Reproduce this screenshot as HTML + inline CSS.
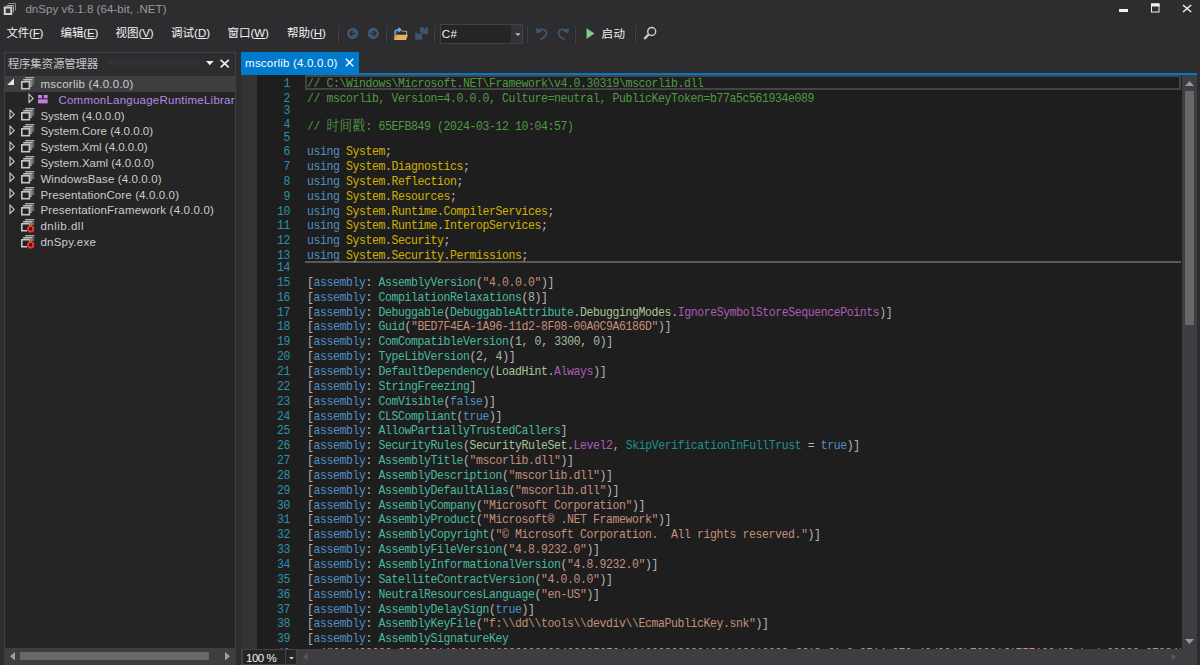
<!DOCTYPE html>
<html lang="zh-CN"><head><meta charset="utf-8"><title>dnSpy v6.1.8 (64-bit, .NET)</title>
<style>
*{box-sizing:border-box;margin:0;padding:0}
html,body{width:1200px;height:665px;overflow:hidden;background:#2d2d30}
body{position:relative;font-family:"Liberation Sans","Noto Sans CJK SC",sans-serif;font-size:12px;color:#f1f1f1}
.abs,.ti,.tt,.ln,.cl,.sel,.mi{position:absolute}
.tx{white-space:nowrap;line-height:16px}
.title{left:25.5px;top:1.5px;font-size:12px;line-height:16px;color:#9a9a9a;white-space:nowrap;letter-spacing:.12px}
.mi{top:25px;font-size:12px;line-height:16px;color:#f1f1f1;white-space:nowrap}
.tx u{text-decoration:underline;text-underline-offset:0.6px;text-decoration-thickness:1px}
.sep{position:absolute;top:26px;width:2px;height:17px;background:linear-gradient(90deg,#262628 50%,#414145 50%);margin-left:-1px}
#panel{position:absolute;left:4px;top:52px;width:232px;height:613px;background:#252526;border:1px solid #3f3f46;border-bottom:0;overflow:hidden}
#phead{position:absolute;left:0;top:0;width:230px;height:23px;background:#2d2d30}
.ptitle{position:absolute;left:3px;top:3px;font-size:12px;line-height:16px;color:#d0d0d0;white-space:nowrap}
.tt{font-size:12px;line-height:16px;white-space:nowrap}
.sel{left:5px;width:230px;height:16.4px;background:#3e3e40}
#tree{position:absolute;left:0;top:0;width:235px;height:648px;overflow:hidden}
#editor{position:absolute;left:241px;top:75px;width:941px;height:574px;background:#1e1e1e;overflow:hidden}
#gutter{position:absolute;left:241px;top:75px;width:16px;height:574px;background:#333333}
#codeclip{position:absolute;left:0;top:0;width:1181px;height:649px;overflow:hidden}
.ln,.cl{font-family:"Liberation Mono","Noto Sans CJK SC",monospace;font-size:11.5px;letter-spacing:-0.401px;line-height:14px;height:14px;white-space:pre;transform:scaleY(1.06);transform-origin:0 0}
.cl{opacity:.9}
.ln{left:250px;width:40px;text-align:right;color:#2b91af}
.cl{left:307px}
.cj{font-family:"Noto Serif CJK SC","Noto Sans CJK SC","Liberation Mono",monospace;font-size:12.5px;letter-spacing:0.5px}
.c,.cj{color:#57a64a}.k{color:#569cd6}.n{color:#e0c000}.t{color:#4ec9b0}.s{color:#d69d85}.p{color:#c4c4c4}.u{color:#b5cea8}.e{color:#b8d7a3}.f{color:#bd63c5}.r{color:#1b9f9f}
</style></head><body>
<!-- title bar -->
<svg class="abs" style="left:3px;top:2px" width="14" height="14" viewBox="0 0 14 14"><path d="M5.5 1.5H12.5V8.5" fill="none" stroke="#8c8c8c" stroke-width="1"/><path d="M3.5 3.5H10.5V10.5" fill="none" stroke="#a8a8a8" stroke-width="1"/><rect x="1.75" y="5.5" width="6.5" height="6.5" fill="#3a3a3c" stroke="#d2d2d2" stroke-width="2"/></svg>
<div class="abs tx" style="left:25.40px;top:0.50px;font-size:11.5px;letter-spacing:0.069px;color:#999999;">dnSpy v6.1.8 (64-bit, .NET)</div>
<div class="abs" style="left:1119px;top:8.5px;width:9px;height:3.5px;background:#f1f1f1"></div>
<svg class="abs" style="left:1150px;top:3px" width="10" height="10" viewBox="0 0 10 10"><rect x="1" y="0.5" width="8.5" height="3" fill="#f1f1f1"/><rect x="1.5" y="1" width="7.5" height="8" fill="none" stroke="#f1f1f1" stroke-width="1"/></svg>
<svg class="abs" style="left:1182px;top:4px" width="10" height="9" viewBox="0 0 10 9"><path d="M1 1L9.2 8M9.2 1L1 8" stroke="#f1f1f1" stroke-width="1.5" fill="none"/></svg>

<!-- menu -->
<div class="abs tx" style="left:6.50px;top:25.00px;font-size:11.5px;letter-spacing:-0.217px;color:#f1f1f1;">文件(<u>F</u>)</div>
<div class="abs tx" style="left:60.60px;top:25.00px;font-size:11.5px;letter-spacing:-0.129px;color:#f1f1f1;">编辑(<u>E</u>)</div>
<div class="abs tx" style="left:115.50px;top:25.00px;font-size:11.5px;letter-spacing:-0.049px;color:#f1f1f1;">视图(<u>V</u>)</div>
<div class="abs tx" style="left:171.10px;top:25.00px;font-size:11.5px;letter-spacing:0.006px;color:#f1f1f1;">调试(<u>D</u>)</div>
<div class="abs tx" style="left:227.60px;top:25.00px;font-size:11.5px;letter-spacing:-0.043px;color:#f1f1f1;">窗口(<u>W</u>)</div>
<div class="abs tx" style="left:286.90px;top:25.00px;font-size:11.5px;letter-spacing:0.006px;color:#f1f1f1;">帮助(<u>H</u>)</div>

<!-- toolbar -->
<div class="sep" style="left:338px"></div>
<svg class="abs" style="left:346px;top:27px" width="14" height="14" viewBox="0 0 14 14"><circle cx="6.7" cy="6.4" r="5.6" fill="#3f5873"/><path d="M6.6 3.6L3.8 6.4L6.6 9.2M4 6.4H9.8" stroke="#2d2d30" stroke-width="1.5" fill="none"/></svg>
<svg class="abs" style="left:366px;top:27px" width="14" height="14" viewBox="0 0 14 14"><circle cx="7.2" cy="6.4" r="5.6" fill="#3f5873"/><path d="M7.3 3.6L10.1 6.4L7.3 9.2M9.9 6.4H4.1" stroke="#2d2d30" stroke-width="1.5" fill="none"/></svg>
<div class="sep" style="left:386px"></div>
<svg class="abs" style="left:393px;top:26px" width="16" height="16" viewBox="0 0 16 16"><path d="M8.6 5.3H13.6V9" fill="none" stroke="#c9964a" stroke-width="1.1"/><path d="M1 8.4H4.6V14H1Z" fill="#b98a3e"/><path d="M4.4 8.8H14.9L13.2 14H1Z" fill="#e3b364"/><path d="M2.6 8.2C1.2 5.6 2.6 3.4 6.6 4" fill="none" stroke="#5aa2e6" stroke-width="1.9"/><path d="M5.6 1L9 4.1L5.2 6.6Z" fill="#6cb2f2"/></svg>
<svg class="abs" style="left:414px;top:27px" width="15" height="14" viewBox="0 0 15 14"><path d="M6 0.2H13L14 1.2V7H6Z" fill="#40566f"/><rect x="9.6" y="0.2" width="1.6" height="2" fill="#2d2d30"/><path d="M0.8 5.4H7.8L8.6 6.2V13H0.8Z" fill="#40566f" stroke="#2d2d30" stroke-width="0.8"/><rect x="3.6" y="5.6" width="1.8" height="2" fill="#2d2d30"/></svg>
<div class="sep" style="left:434px"></div>
<div class="abs" style="left:440px;top:24px;width:83px;height:19.5px;background:#252526;border:1px solid #434346"></div>
<div class="abs" style="left:511.2px;top:25px;width:10.8px;height:17.5px;background:#333337"></div>
<div class="abs tx" style="left:441.70px;top:25.50px;font-size:11.5px;letter-spacing:0.598px;color:#f1f1f1;">C#</div>
<svg class="abs" style="left:515px;top:33px" width="6" height="4" viewBox="0 0 6 4"><path d="M0.2 0.2H5.6L2.9 3.1Z" fill="#c0c0c0"/></svg>
<div class="sep" style="left:527px"></div>
<svg class="abs" style="left:535px;top:27px" width="14" height="14" viewBox="0 0 14 14"><path d="M3.2 3.6C7.5 0.8 12 3.2 11.4 6.8C11 9 8.5 10.8 5.2 12.4" fill="none" stroke="#3f5873" stroke-width="1.7"/><path d="M1 0.8L1.6 6.6L7 4.6Z" fill="#3f5873"/></svg>
<svg class="abs" style="left:555.5px;top:27px" width="14" height="14" viewBox="0 0 14 14"><path d="M10.8 3.6C6.5 0.8 2 3.2 2.6 6.8C3 9 5.5 10.8 8.8 12.4" fill="none" stroke="#3f5873" stroke-width="1.7"/><path d="M13 0.8L12.4 6.6L7 4.6Z" fill="#3f5873"/></svg>
<div class="sep" style="left:575px"></div>
<svg class="abs" style="left:585.5px;top:28px" width="9" height="12" viewBox="0 0 9 12"><path d="M0.5 0.3L8.4 5.6L0.5 10.9Z" fill="#84cc84"/></svg>
<div class="abs tx" style="left:601.40px;top:25.50px;font-size:11.5px;letter-spacing:0.600px;color:#f1f1f1;">启动</div>
<div class="sep" style="left:635px"></div>
<svg class="abs" style="left:643px;top:26px" width="15" height="15" viewBox="0 0 15 15"><circle cx="8.7" cy="5.5" r="4" fill="none" stroke="#cfcfcf" stroke-width="1.4"/><path d="M5.8 8.4L1.2 13" stroke="#cfcfcf" stroke-width="2.2" fill="none"/></svg>

<!-- tree panel -->
<div id="panel"><div id="phead"></div></div>
<div class="abs tx" style="left:7.70px;top:55.50px;font-size:11.5px;letter-spacing:-0.200px;color:#c6c6c6;">程序集资源管理器</div>
<svg class="abs" style="left:107px;top:61px" width="91" height="5" viewBox="0 0 91 5"><defs><pattern id="dots" width="4" height="4" patternUnits="userSpaceOnUse"><rect x="2" y="0" width="1" height="1" fill="#48484c"/><rect x="0" y="2" width="1" height="1" fill="#48484c"/></pattern></defs><rect width="91" height="5" fill="url(#dots)"/></svg>
<svg class="abs" style="left:206px;top:60.7px" width="8" height="5" viewBox="0 0 8 5"><path d="M0 0H7.6L3.8 4.3Z" fill="#f1f1f1"/></svg>
<svg class="abs" style="left:220px;top:58.6px" width="10" height="10" viewBox="0 0 10 10"><path d="M0.6 0.8L8.8 8.4M8.8 0.8L0.6 8.4" stroke="#f1f1f1" stroke-width="1.6" fill="none"/></svg>
<div id="tree">
<div class="sel" style="top:75.7px"></div>
<svg class="ti" style="left:7px;top:78.4px" width="8" height="8" viewBox="0 0 8 8"><path d="M7 0.2V7H0.2Z" fill="#e6e6e6"/></svg>
<svg class="ti" style="left:20.8px;top:76.5px" width="14" height="13" viewBox="0 0 14 13"><rect x="4.2" y="0" width="9" height="8" fill="#656565"/><rect x="4.2" y="0" width="9" height="1" fill="#a8a8a8"/><rect x="2.2" y="2" width="9" height="8" fill="#828282"/><rect x="2.2" y="2" width="9" height="1" fill="#bdbdbd"/><rect x="0.8" y="4.8" width="7.6" height="6.9" fill="#222224" stroke="#c6c6c6" stroke-width="1.6"/></svg>
<div class="abs tx" style="left:40.40px;top:76.00px;font-size:11.5px;letter-spacing:0.242px;color:#cccccc;">mscorlib (4.0.0.0)</div>
<svg class="ti" style="left:28.4px;top:93.1px" width="7" height="11" viewBox="0 0 7 11"><path d="M1 1.2L5.2 5.4L1 9.6Z" fill="none" stroke="#d4d4d4" stroke-width="1.05"/></svg>
<svg class="ti" style="left:37.9px;top:94.7px" width="10" height="9" viewBox="0 0 10 9"><rect x="0" y="0" width="4.1" height="3.3" fill="#c07fe0"/><rect x="5.7" y="0" width="4" height="3.3" fill="#c07fe0"/><rect x="0" y="4.3" width="9.7" height="4.1" fill="#c07fe0"/></svg>
<div class="tt" style="left:58.4px;top:91.8px;color:#b18ae0;font-size:11.5px;letter-spacing:0.235px">CommonLanguageRuntimeLibrary</div>
<svg class="ti" style="left:9.4px;top:108.9px" width="7" height="11" viewBox="0 0 7 11"><path d="M1 1.2L5.2 5.4L1 9.6Z" fill="none" stroke="#d4d4d4" stroke-width="1.05"/></svg>
<svg class="ti" style="left:20.8px;top:108.1px" width="14" height="13" viewBox="0 0 14 13"><rect x="4.2" y="0" width="9" height="8" fill="#656565"/><rect x="4.2" y="0" width="9" height="1" fill="#a8a8a8"/><rect x="2.2" y="2" width="9" height="8" fill="#828282"/><rect x="2.2" y="2" width="9" height="1" fill="#bdbdbd"/><rect x="0.8" y="4.8" width="7.6" height="6.9" fill="#222224" stroke="#c6c6c6" stroke-width="1.6"/></svg>
<div class="abs tx" style="left:40.40px;top:107.60px;font-size:11.5px;letter-spacing:-0.011px;color:#cccccc;">System (4.0.0.0)</div>
<svg class="ti" style="left:9.4px;top:124.7px" width="7" height="11" viewBox="0 0 7 11"><path d="M1 1.2L5.2 5.4L1 9.6Z" fill="none" stroke="#d4d4d4" stroke-width="1.05"/></svg>
<svg class="ti" style="left:20.8px;top:123.9px" width="14" height="13" viewBox="0 0 14 13"><rect x="4.2" y="0" width="9" height="8" fill="#656565"/><rect x="4.2" y="0" width="9" height="1" fill="#a8a8a8"/><rect x="2.2" y="2" width="9" height="8" fill="#828282"/><rect x="2.2" y="2" width="9" height="1" fill="#bdbdbd"/><rect x="0.8" y="4.8" width="7.6" height="6.9" fill="#222224" stroke="#c6c6c6" stroke-width="1.6"/></svg>
<div class="abs tx" style="left:40.40px;top:123.40px;font-size:11.5px;letter-spacing:0.010px;color:#cccccc;">System.Core (4.0.0.0)</div>
<svg class="ti" style="left:9.4px;top:140.5px" width="7" height="11" viewBox="0 0 7 11"><path d="M1 1.2L5.2 5.4L1 9.6Z" fill="none" stroke="#d4d4d4" stroke-width="1.05"/></svg>
<svg class="ti" style="left:20.8px;top:139.7px" width="14" height="13" viewBox="0 0 14 13"><rect x="4.2" y="0" width="9" height="8" fill="#656565"/><rect x="4.2" y="0" width="9" height="1" fill="#a8a8a8"/><rect x="2.2" y="2" width="9" height="8" fill="#828282"/><rect x="2.2" y="2" width="9" height="1" fill="#bdbdbd"/><rect x="0.8" y="4.8" width="7.6" height="6.9" fill="#222224" stroke="#c6c6c6" stroke-width="1.6"/></svg>
<div class="abs tx" style="left:40.40px;top:139.20px;font-size:11.5px;letter-spacing:-0.009px;color:#cccccc;">System.Xml (4.0.0.0)</div>
<svg class="ti" style="left:9.4px;top:156.3px" width="7" height="11" viewBox="0 0 7 11"><path d="M1 1.2L5.2 5.4L1 9.6Z" fill="none" stroke="#d4d4d4" stroke-width="1.05"/></svg>
<svg class="ti" style="left:20.8px;top:155.5px" width="14" height="13" viewBox="0 0 14 13"><rect x="4.2" y="0" width="9" height="8" fill="#656565"/><rect x="4.2" y="0" width="9" height="1" fill="#a8a8a8"/><rect x="2.2" y="2" width="9" height="8" fill="#828282"/><rect x="2.2" y="2" width="9" height="1" fill="#bdbdbd"/><rect x="0.8" y="4.8" width="7.6" height="6.9" fill="#222224" stroke="#c6c6c6" stroke-width="1.6"/></svg>
<div class="abs tx" style="left:40.40px;top:155.00px;font-size:11.5px;letter-spacing:-0.003px;color:#cccccc;">System.Xaml (4.0.0.0)</div>
<svg class="ti" style="left:9.4px;top:172.1px" width="7" height="11" viewBox="0 0 7 11"><path d="M1 1.2L5.2 5.4L1 9.6Z" fill="none" stroke="#d4d4d4" stroke-width="1.05"/></svg>
<svg class="ti" style="left:20.8px;top:171.3px" width="14" height="13" viewBox="0 0 14 13"><rect x="4.2" y="0" width="9" height="8" fill="#656565"/><rect x="4.2" y="0" width="9" height="1" fill="#a8a8a8"/><rect x="2.2" y="2" width="9" height="8" fill="#828282"/><rect x="2.2" y="2" width="9" height="1" fill="#bdbdbd"/><rect x="0.8" y="4.8" width="7.6" height="6.9" fill="#222224" stroke="#c6c6c6" stroke-width="1.6"/></svg>
<div class="abs tx" style="left:40.40px;top:170.80px;font-size:11.5px;letter-spacing:0.110px;color:#cccccc;">WindowsBase (4.0.0.0)</div>
<svg class="ti" style="left:9.4px;top:187.9px" width="7" height="11" viewBox="0 0 7 11"><path d="M1 1.2L5.2 5.4L1 9.6Z" fill="none" stroke="#d4d4d4" stroke-width="1.05"/></svg>
<svg class="ti" style="left:20.8px;top:187.1px" width="14" height="13" viewBox="0 0 14 13"><rect x="4.2" y="0" width="9" height="8" fill="#656565"/><rect x="4.2" y="0" width="9" height="1" fill="#a8a8a8"/><rect x="2.2" y="2" width="9" height="8" fill="#828282"/><rect x="2.2" y="2" width="9" height="1" fill="#bdbdbd"/><rect x="0.8" y="4.8" width="7.6" height="6.9" fill="#222224" stroke="#c6c6c6" stroke-width="1.6"/></svg>
<div class="abs tx" style="left:40.40px;top:186.60px;font-size:11.5px;letter-spacing:0.122px;color:#cccccc;">PresentationCore (4.0.0.0)</div>
<svg class="ti" style="left:9.4px;top:203.7px" width="7" height="11" viewBox="0 0 7 11"><path d="M1 1.2L5.2 5.4L1 9.6Z" fill="none" stroke="#d4d4d4" stroke-width="1.05"/></svg>
<svg class="ti" style="left:20.8px;top:202.9px" width="14" height="13" viewBox="0 0 14 13"><rect x="4.2" y="0" width="9" height="8" fill="#656565"/><rect x="4.2" y="0" width="9" height="1" fill="#a8a8a8"/><rect x="2.2" y="2" width="9" height="8" fill="#828282"/><rect x="2.2" y="2" width="9" height="1" fill="#bdbdbd"/><rect x="0.8" y="4.8" width="7.6" height="6.9" fill="#222224" stroke="#c6c6c6" stroke-width="1.6"/></svg>
<div class="abs tx" style="left:40.40px;top:202.40px;font-size:11.5px;letter-spacing:0.180px;color:#cccccc;">PresentationFramework (4.0.0.0)</div>
<svg class="ti" style="left:20.8px;top:218.7px" width="14" height="14" viewBox="0 0 14 14"><rect x="4.2" y="0" width="9" height="6" fill="#656565"/><rect x="4.2" y="0" width="9" height="1" fill="#a8a8a8"/><rect x="2.2" y="2" width="9" height="5" fill="#828282"/><rect x="2.2" y="2" width="9" height="1" fill="#bdbdbd"/><path d="M8.4 4.8H0.8V11.7H6" fill="#222224" stroke="#c6c6c6" stroke-width="1.6"/><circle cx="9.7" cy="9.9" r="3.6" fill="#ee3a2c"/><path d="M8.3 8.5L11.1 11.3M11.1 8.5L8.3 11.3" stroke="#3a0d08" stroke-width="1.3"/></svg>
<div class="abs tx" style="left:40.40px;top:218.20px;font-size:11.5px;letter-spacing:0.511px;color:#cccccc;">dnlib.dll</div>
<svg class="ti" style="left:20.8px;top:234.5px" width="14" height="14" viewBox="0 0 14 14"><rect x="4.2" y="0" width="9" height="6" fill="#656565"/><rect x="4.2" y="0" width="9" height="1" fill="#a8a8a8"/><rect x="2.2" y="2" width="9" height="5" fill="#828282"/><rect x="2.2" y="2" width="9" height="1" fill="#bdbdbd"/><path d="M8.4 4.8H0.8V11.7H6" fill="#222224" stroke="#c6c6c6" stroke-width="1.6"/><circle cx="9.7" cy="9.9" r="3.6" fill="#ee3a2c"/><path d="M8.3 8.5L11.1 11.3M11.1 8.5L8.3 11.3" stroke="#3a0d08" stroke-width="1.3"/></svg>
<div class="abs tx" style="left:40.40px;top:234.00px;font-size:11.5px;letter-spacing:0.244px;color:#cccccc;">dnSpy.exe</div>
</div>
<!-- tree h scrollbar -->
<div class="abs" style="left:5px;top:648px;width:230px;height:17px;background:#3e3e42"></div>
<div class="abs" style="left:20px;top:652px;width:189px;height:8.3px;background:#686868"></div>
<svg class="abs" style="left:10px;top:652px" width="5" height="9" viewBox="0 0 5 9"><path d="M5 0V8.6L0 4.3Z" fill="#a0a0a0"/></svg>
<svg class="abs" style="left:224.5px;top:652px" width="5" height="9" viewBox="0 0 5 9"><path d="M0 0V8.6L5 4.3Z" fill="#a0a0a0"/></svg>

<!-- tab -->
<div class="abs" style="left:241px;top:52px;width:118px;height:23px;background:#007acc"></div>
<div class="abs" style="left:241px;top:73px;width:956px;height:2px;background:#007acc"></div>
<div class="abs tx" style="left:245.10px;top:55.00px;font-size:11.5px;letter-spacing:0.203px;color:#ffffff;">mscorlib (4.0.0.0)</div>
<svg class="abs" style="left:345px;top:58px" width="9" height="9" viewBox="0 0 9 9"><path d="M0.8 0.8L8.2 8.2M8.2 0.8L0.8 8.2" stroke="#fff" stroke-width="1.4" fill="none"/></svg>

<!-- editor -->
<div id="editor"></div>
<div id="gutter"></div>
<div class="abs" style="left:305px;top:75px;width:876px;height:15px;border:2px solid #444444"></div>
<div class="abs" style="left:305px;top:261.4px;width:876px;height:1.5px;background:#5a5a5a"></div>
<div id="codeclip">
<div class="ln" style="top:75.83px">1</div>
<div class="ln" style="top:90.68px">2</div>
<div class="ln" style="top:102.93px">3</div>
<div class="ln" style="top:117.43px">4</div>
<div class="ln" style="top:129.68px">5</div>
<div class="ln" style="top:144.18px">6</div>
<div class="ln" style="top:159.03px">7</div>
<div class="ln" style="top:173.88px">8</div>
<div class="ln" style="top:188.73px">9</div>
<div class="ln" style="top:203.58px">10</div>
<div class="ln" style="top:218.43px">11</div>
<div class="ln" style="top:233.28px">12</div>
<div class="ln" style="top:248.13px">13</div>
<div class="ln" style="top:260.38px">14</div>
<div class="ln" style="top:274.88px">15</div>
<div class="ln" style="top:289.73px">16</div>
<div class="ln" style="top:304.58px">17</div>
<div class="ln" style="top:319.43px">18</div>
<div class="ln" style="top:334.28px">19</div>
<div class="ln" style="top:349.13px">20</div>
<div class="ln" style="top:363.98px">21</div>
<div class="ln" style="top:378.83px">22</div>
<div class="ln" style="top:393.68px">23</div>
<div class="ln" style="top:408.53px">24</div>
<div class="ln" style="top:423.38px">25</div>
<div class="ln" style="top:438.23px">26</div>
<div class="ln" style="top:453.08px">27</div>
<div class="ln" style="top:467.93px">28</div>
<div class="ln" style="top:482.78px">29</div>
<div class="ln" style="top:497.63px">30</div>
<div class="ln" style="top:512.48px">31</div>
<div class="ln" style="top:527.33px">32</div>
<div class="ln" style="top:542.18px">33</div>
<div class="ln" style="top:557.03px">34</div>
<div class="ln" style="top:571.88px">35</div>
<div class="ln" style="top:586.73px">36</div>
<div class="ln" style="top:601.58px">37</div>
<div class="ln" style="top:616.43px">38</div>
<div class="ln" style="top:631.28px">39</div>
<div class="ln" style="top:645.63px">40</div>
<div class="cl" style="top:75.83px"><span class="c">// C:\Windows\Microsoft.NET\Framework\v4.0.30319\mscorlib.dll</span></div>
<div class="cl" style="top:90.68px"><span class="c">// mscorlib, Version=4.0.0.0, Culture=neutral, PublicKeyToken=b77a5c561934e089</span></div>
<div class="cl" style="top:117.43px"><span class="c">// </span><span class="cj">时间戳</span><span class="c">: 65EFB849 (2024-03-12 10:04:57)</span></div>
<div class="cl" style="top:144.18px"><span class="k">using</span><span class="p"> </span><span class="n">System</span><span class="p">;</span></div>
<div class="cl" style="top:159.03px"><span class="k">using</span><span class="p"> </span><span class="n">System</span><span class="p">.</span><span class="n">Diagnostics</span><span class="p">;</span></div>
<div class="cl" style="top:173.88px"><span class="k">using</span><span class="p"> </span><span class="n">System</span><span class="p">.</span><span class="n">Reflection</span><span class="p">;</span></div>
<div class="cl" style="top:188.73px"><span class="k">using</span><span class="p"> </span><span class="n">System</span><span class="p">.</span><span class="n">Resources</span><span class="p">;</span></div>
<div class="cl" style="top:203.58px"><span class="k">using</span><span class="p"> </span><span class="n">System</span><span class="p">.</span><span class="n">Runtime</span><span class="p">.</span><span class="n">CompilerServices</span><span class="p">;</span></div>
<div class="cl" style="top:218.43px"><span class="k">using</span><span class="p"> </span><span class="n">System</span><span class="p">.</span><span class="n">Runtime</span><span class="p">.</span><span class="n">InteropServices</span><span class="p">;</span></div>
<div class="cl" style="top:233.28px"><span class="k">using</span><span class="p"> </span><span class="n">System</span><span class="p">.</span><span class="n">Security</span><span class="p">;</span></div>
<div class="cl" style="top:248.13px"><span class="k">using</span><span class="p"> </span><span class="n">System</span><span class="p">.</span><span class="n">Security</span><span class="p">.</span><span class="n">Permissions</span><span class="p">;</span></div>
<div class="cl" style="top:274.88px"><span class="p">[</span><span class="k">assembly</span><span class="p">: </span><span class="t">AssemblyVersion</span><span class="p">(</span><span class="s">"4.0.0.0"</span><span class="p">)</span><span class="p">]</span></div>
<div class="cl" style="top:289.73px"><span class="p">[</span><span class="k">assembly</span><span class="p">: </span><span class="t">CompilationRelaxations</span><span class="p">(</span><span class="u">8</span><span class="p">)</span><span class="p">]</span></div>
<div class="cl" style="top:304.58px"><span class="p">[</span><span class="k">assembly</span><span class="p">: </span><span class="t">Debuggable</span><span class="p">(</span><span class="t">DebuggableAttribute</span><span class="p">.</span><span class="e">DebuggingModes</span><span class="p">.</span><span class="f">IgnoreSymbolStoreSequencePoints</span><span class="p">)</span><span class="p">]</span></div>
<div class="cl" style="top:319.43px"><span class="p">[</span><span class="k">assembly</span><span class="p">: </span><span class="t">Guid</span><span class="p">(</span><span class="s">"BED7F4EA-1A96-11d2-8F08-00A0C9A6186D"</span><span class="p">)</span><span class="p">]</span></div>
<div class="cl" style="top:334.28px"><span class="p">[</span><span class="k">assembly</span><span class="p">: </span><span class="t">ComCompatibleVersion</span><span class="p">(</span><span class="u">1</span><span class="p">, </span><span class="u">0</span><span class="p">, </span><span class="u">3300</span><span class="p">, </span><span class="u">0</span><span class="p">)</span><span class="p">]</span></div>
<div class="cl" style="top:349.13px"><span class="p">[</span><span class="k">assembly</span><span class="p">: </span><span class="t">TypeLibVersion</span><span class="p">(</span><span class="u">2</span><span class="p">, </span><span class="u">4</span><span class="p">)</span><span class="p">]</span></div>
<div class="cl" style="top:363.98px"><span class="p">[</span><span class="k">assembly</span><span class="p">: </span><span class="t">DefaultDependency</span><span class="p">(</span><span class="e">LoadHint</span><span class="p">.</span><span class="f">Always</span><span class="p">)</span><span class="p">]</span></div>
<div class="cl" style="top:378.83px"><span class="p">[</span><span class="k">assembly</span><span class="p">: </span><span class="t">StringFreezing</span><span class="p">]</span></div>
<div class="cl" style="top:393.68px"><span class="p">[</span><span class="k">assembly</span><span class="p">: </span><span class="t">ComVisible</span><span class="p">(</span><span class="k">false</span><span class="p">)</span><span class="p">]</span></div>
<div class="cl" style="top:408.53px"><span class="p">[</span><span class="k">assembly</span><span class="p">: </span><span class="t">CLSCompliant</span><span class="p">(</span><span class="k">true</span><span class="p">)</span><span class="p">]</span></div>
<div class="cl" style="top:423.38px"><span class="p">[</span><span class="k">assembly</span><span class="p">: </span><span class="t">AllowPartiallyTrustedCallers</span><span class="p">]</span></div>
<div class="cl" style="top:438.23px"><span class="p">[</span><span class="k">assembly</span><span class="p">: </span><span class="t">SecurityRules</span><span class="p">(</span><span class="e">SecurityRuleSet</span><span class="p">.</span><span class="f">Level2</span><span class="p">, </span><span class="r">SkipVerificationInFullTrust</span><span class="p"> = </span><span class="k">true</span><span class="p">)</span><span class="p">]</span></div>
<div class="cl" style="top:453.08px"><span class="p">[</span><span class="k">assembly</span><span class="p">: </span><span class="t">AssemblyTitle</span><span class="p">(</span><span class="s">"mscorlib.dll"</span><span class="p">)</span><span class="p">]</span></div>
<div class="cl" style="top:467.93px"><span class="p">[</span><span class="k">assembly</span><span class="p">: </span><span class="t">AssemblyDescription</span><span class="p">(</span><span class="s">"mscorlib.dll"</span><span class="p">)</span><span class="p">]</span></div>
<div class="cl" style="top:482.78px"><span class="p">[</span><span class="k">assembly</span><span class="p">: </span><span class="t">AssemblyDefaultAlias</span><span class="p">(</span><span class="s">"mscorlib.dll"</span><span class="p">)</span><span class="p">]</span></div>
<div class="cl" style="top:497.63px"><span class="p">[</span><span class="k">assembly</span><span class="p">: </span><span class="t">AssemblyCompany</span><span class="p">(</span><span class="s">"Microsoft Corporation"</span><span class="p">)</span><span class="p">]</span></div>
<div class="cl" style="top:512.48px"><span class="p">[</span><span class="k">assembly</span><span class="p">: </span><span class="t">AssemblyProduct</span><span class="p">(</span><span class="s">"Microsoft® .NET Framework"</span><span class="p">)</span><span class="p">]</span></div>
<div class="cl" style="top:527.33px"><span class="p">[</span><span class="k">assembly</span><span class="p">: </span><span class="t">AssemblyCopyright</span><span class="p">(</span><span class="s">"© Microsoft Corporation.  All rights reserved."</span><span class="p">)</span><span class="p">]</span></div>
<div class="cl" style="top:542.18px"><span class="p">[</span><span class="k">assembly</span><span class="p">: </span><span class="t">AssemblyFileVersion</span><span class="p">(</span><span class="s">"4.8.9232.0"</span><span class="p">)</span><span class="p">]</span></div>
<div class="cl" style="top:557.03px"><span class="p">[</span><span class="k">assembly</span><span class="p">: </span><span class="t">AssemblyInformationalVersion</span><span class="p">(</span><span class="s">"4.8.9232.0"</span><span class="p">)</span><span class="p">]</span></div>
<div class="cl" style="top:571.88px"><span class="p">[</span><span class="k">assembly</span><span class="p">: </span><span class="t">SatelliteContractVersion</span><span class="p">(</span><span class="s">"4.0.0.0"</span><span class="p">)</span><span class="p">]</span></div>
<div class="cl" style="top:586.73px"><span class="p">[</span><span class="k">assembly</span><span class="p">: </span><span class="t">NeutralResourcesLanguage</span><span class="p">(</span><span class="s">"en-US"</span><span class="p">)</span><span class="p">]</span></div>
<div class="cl" style="top:601.58px"><span class="p">[</span><span class="k">assembly</span><span class="p">: </span><span class="t">AssemblyDelaySign</span><span class="p">(</span><span class="k">true</span><span class="p">)</span><span class="p">]</span></div>
<div class="cl" style="top:616.43px"><span class="p">[</span><span class="k">assembly</span><span class="p">: </span><span class="t">AssemblyKeyFile</span><span class="p">(</span><span class="s">"f:\\dd\\tools\\devdiv\\EcmaPublicKey.snk"</span><span class="p">)</span><span class="p">]</span></div>
<div class="cl" style="top:631.28px"><span class="p">[</span><span class="k">assembly</span><span class="p">: </span><span class="t">AssemblySignatureKey</span></div>
<div class="cl" style="top:645.63px"><span class="p">  (</span><span class="s">"002400000c800000140100000602000000240000525341310008000001000100613399aff18ef1a2c2514a273a42d9042b72321f1757102df9ebada69923e2738406c21e5b801552ab8d200a65a235e001ac9adc25f2d811eb09496a4c6a59d4619589c69f5baf0c4179a47311d92555cd006acc8b5959f2bd6e10e360c34537a1d266da8085856583c85d81da7f3ec01ed9564c58d93d713cd0172c8e23a10f0239b80c96b07736f5d8b022542a4e74251a5f432824318b3539a5a087f8e53d2f135f9ca47f3bb2e10aff0af0849504fb7cea3ff192dc8de0edad64c68efde34c56d302ad55fd6e80f302d5efcdeae953658d3452561b5f36c542efdbdd9f888538d374cef106acf7d93a4445c3c73cd911f0571aaf3d54da12b11ddec375b3"</span></div>
</div>
<!-- v scrollbar -->
<div class="abs" style="left:1181.5px;top:75px;width:15.5px;height:574px;background:#3e3e42"></div>
<div class="abs" style="left:1185px;top:90.8px;width:8.7px;height:233.8px;background:#686868"></div>
<svg class="abs" style="left:1185px;top:81px" width="9" height="5" viewBox="0 0 9 5"><path d="M0 5H9L4.5 0Z" fill="#999"/></svg>
<svg class="abs" style="left:1185px;top:639px" width="9" height="5" viewBox="0 0 9 5"><path d="M0 0H9L4.5 5Z" fill="#999"/></svg>
<!-- bottom bar -->
<div class="abs" style="left:241px;top:649px;width:956px;height:16px;background:#3e3e42"></div>
<div class="abs" style="left:241.5px;top:649px;width:55px;height:16px;background:#252526;border:1px solid #434346"></div>
<div class="abs" style="left:285px;top:650px;width:1px;height:15px;background:#434346"></div>
<div class="abs tx" style="left:246.10px;top:649.70px;font-size:11.5px;letter-spacing:-0.522px;color:#f1f1f1;">100 %</div>
<svg class="abs" style="left:289px;top:657px" width="5" height="3" viewBox="0 0 5 3"><path d="M0 0H5L2.5 2.6Z" fill="#c8c8c8"/></svg>
<svg class="abs" style="left:302.5px;top:653px" width="5" height="8" viewBox="0 0 5 8"><path d="M4.6 0.3V7.7L0 4Z" fill="#55555a"/></svg>
<svg class="abs" style="left:1171px;top:653px" width="5" height="8" viewBox="0 0 5 8"><path d="M0.4 0.3V7.7L5 4Z" fill="#55555a"/></svg>
</body></html>
